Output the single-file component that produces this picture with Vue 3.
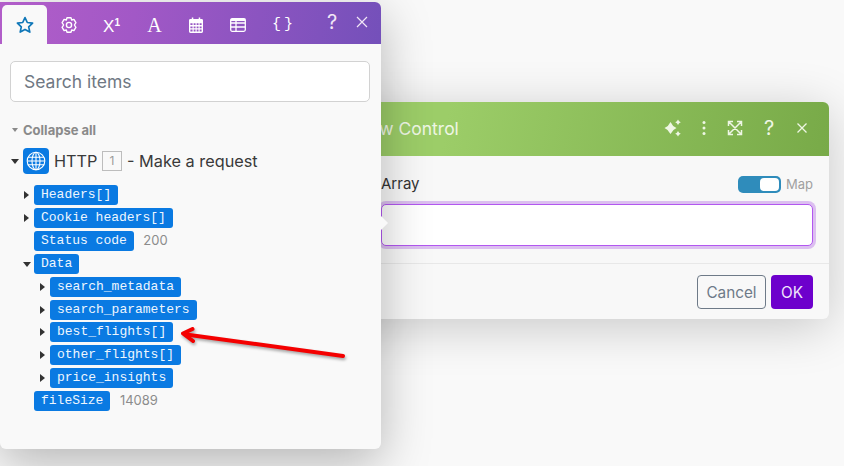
<script setup>
const rows = [
  { name: 'Headers[]', caret: 'right' },
  { name: 'Cookie headers[]', caret: 'right' },
  { name: 'Status code', value: '200' },
  { name: 'Data', caret: 'down' },
  { name: 'search_metadata', caret: 'right', nested: true },
  { name: 'search_parameters', caret: 'right', nested: true },
  { name: 'best_flights[]', caret: 'right', nested: true },
  { name: 'other_flights[]', caret: 'right', nested: true },
  { name: 'price_insights', caret: 'right', nested: true },
  { name: 'fileSize', value: '14089' },
]
</script>

<template>
  <div class="stage">
    <section class="modal">
      <header class="modal-head">
        <span class="modal-title">Flow Control</span>
        <div class="modal-tools">
          <svg class="mt" width="20" height="20" viewBox="0 0 20 20" fill="#eef6e4">
            <path d="M7.500 4 Q9.300 8.200 13.500 10 Q9.300 11.800 7.500 16 Q5.700 11.800 1.500 10 Q5.700 8.200 7.500 4Z" />
            <path d="M15 1.500 Q15.800 3.500 17.800 4.300 Q15.800 5.100 15 7.100 Q14.200 5.100 12.200 4.300 Q14.200 3.500 15 1.500Z" />
            <path d="M15 12.900 Q15.800 14.900 17.800 15.700 Q15.800 16.500 15 18.500 Q14.200 16.500 12.200 15.700 Q14.200 14.900 15 12.900Z" />
          </svg>
          <svg class="mt m-dots" width="20" height="20" viewBox="0 0 20 20" fill="#eef6e4">
            <circle cx="10" cy="4.500" r="1.500" /><circle cx="10" cy="10" r="1.500" /><circle cx="10" cy="15.500" r="1.500" />
          </svg>
          <svg class="mt m-exp" width="20" height="20" viewBox="0 0 20 20" fill="none" stroke="#eef6e4" stroke-width="1.500">
            <path d="M3.500 8V3.500H8M12 3.500H16.500V8M16.500 12V16.500H12M8 16.500H3.500V12M3.500 3.500L16.500 16.500M16.500 3.500L3.500 16.500" />
          </svg>
          <span class="mt q m-q">?</span>
          <svg class="mt m-x" width="20" height="20" viewBox="0 0 20 20" fill="none" stroke="#eef6e4" stroke-width="1.300">
            <path d="M5.500 5.500L14.500 14.500M14.500 5.500L5.500 14.500" />
          </svg>
        </div>
      </header>
      <div class="modal-body">
        <div class="field-head">
          <span class="field-label">Array</span>
          <span class="toggle"><i class="knob"></i></span>
          <span class="map">Map</span>
        </div>
        <div class="field-input"></div>
      </div>
      <footer class="modal-foot">
        <button class="btn cancel">Cancel</button>
        <button class="btn ok">OK</button>
      </footer>
    </section>

    <section class="panel">
      <header class="tabs">
        <div class="tab active">
          <svg width="20" height="20" viewBox="0 0 20 20" fill="none" stroke="#0f77b8" stroke-width="1.700" stroke-linejoin="round">
            <path d="M10 2.600L12.300 7.500L17.600 8.100L13.700 11.800L14.800 17.100L10 14.400L5.200 17.100L6.300 11.800L2.400 8.100L7.700 7.500Z" />
          </svg>
        </div>
        <div class="tab t-gear">
          <svg width="18" height="18" viewBox="0 0 18 18" fill="none" stroke="#fff" stroke-width="1.400" stroke-linejoin="round">
            <path d="M7 1.800H11L11.700 4L13.900 3.400L15.900 6.600L14.400 9L15.900 11.400L13.900 14.600L11.700 14L11 16.200H7L6.300 14L4.100 14.600L2.100 11.400L3.600 9L2.100 6.600L4.100 3.400L6.300 4Z" />
            <circle cx="9" cy="9" r="2.600" />
          </svg>
        </div>
        <div class="tab t-x"><span class="x-glyph">X<b>1</b></span></div>
        <div class="tab t-a"><span class="a-glyph">A</span></div>
        <div class="tab t-cal">
          <svg width="14" height="16" viewBox="0 0 15 17" fill="#fff">
            <path d="M3 0.500h1.600v2H3zM10.400 0.500H12v2h-1.600z" />
            <path fill-rule="evenodd" d="M1.500 2h12A1.500 1.500 0 0 1 15 3.500V15.500A1.500 1.500 0 0 1 13.500 17H1.500A1.500 1.500 0 0 1 0 15.500V3.500A1.500 1.500 0 0 1 1.500 2ZM1.500 6.500V8.500H3.800V6.500ZM5 6.500V8.500H7V6.500ZM8.200 6.500V8.500H10.200V6.500ZM11.400 6.500V8.500H13.500V6.500ZM1.500 10V12H3.800V10ZM5 10V12H7V10ZM8.200 10V12H10.200V10ZM11.400 10V12H13.500V10ZM1.500 13.200V15.400H3.800V13.200ZM5 13.200V15.400H7V13.200ZM8.200 13.200V15.400H10.200V13.200ZM11.400 13.200V15.400H13.500V13.200Z" />
          </svg>
        </div>
        <div class="tab t-table">
          <svg width="16" height="14" viewBox="0 0 16 14" fill="none" stroke="#fff" stroke-width="1.300">
            <rect x="0.700" y="0.700" width="14.600" height="12.600" rx="1.500" />
            <path d="M0.700 5H15.300M0.700 9H15.300M6 1V13" />
            <rect x="0.700" y="0.700" width="14.600" height="2.300" fill="#fff" stroke="none" />
          </svg>
        </div>
        <div class="tab t-json"><span class="json-glyph">{}</span></div>
        <span class="help">?</span>
        <svg class="close" width="14" height="14" viewBox="0 0 14 14" fill="none" stroke="#f1e6f6" stroke-width="1.200">
          <path d="M2 2L12 12M12 2L2 12" />
        </svg>
      </header>

      <div class="search">Search items</div>

      <div class="collapse"><i class="caret down gray"></i>Collapse all</div>

      <div class="module">
        <i class="caret down dark"></i>
        <span class="globe">
          <svg width="20" height="20" viewBox="0 0 20 20" fill="none" stroke="#fff" stroke-width="1.100">
            <circle cx="10" cy="10" r="8.800" />
            <ellipse cx="10" cy="10" rx="4" ry="8.800" />
            <path d="M10 1.200V18.800M2.100 6.300H17.900M1.300 10H18.700M2.100 13.700H17.900" />
          </svg>
        </span>
        <span class="module-name">HTTP</span>
        <span class="badge">1</span>
        <span class="module-name">- Make a request</span>
      </div>

      <ul class="tree">
        <li v-for="r in rows" :key="r.name" class="row" :class="{ nested: r.nested }">
          <i v-if="r.caret" class="caret dark" :class="r.caret"></i>
          <span class="tag">{{ r.name }}</span>
          <span v-if="r.value" class="val">{{ r.value }}</span>
        </li>
      </ul>
      <i class="pointer"></i>
    </section>

    <svg class="arrow" width="190" height="50" viewBox="170 320 190 50" fill="none">
      <g stroke="#f40000" stroke-width="4" stroke-linecap="round" stroke-linejoin="round">
        <path d="M343 356L186 334.500" />
        <path d="M192.500 329L183 333.500L193 341" />
      </g>
    </svg>
  </div>
</template>

<style scoped>
.stage {
  position: relative;
  width: 844px;
  height: 466px;
  overflow: hidden;
  background: #f9f9f9;
  font-family: Inter, "Noto Sans", sans-serif;
}

.modal {
  position: absolute;
  left: 320px;
  top: 102px;
  width: 509px;
  height: 217px;
  display: flex;
  flex-direction: column;
  background: #f8f8f8;
  border-radius: 6px;
  box-shadow: 0 8px 50px rgba(0, 0, 0, 0.2);
}
.modal-head {
  height: 54px;
  flex: none;
  display: flex;
  align-items: center;
  justify-content: space-between;
  padding: 0 17.500px 2px 34.500px;
  box-sizing: border-box;
  border-radius: 6px 6px 0 0;
  background: linear-gradient(100deg, #9ccd68 25%, #78aa48 100%);
}
.modal-title { color: #eef6e4; font-size: 17.500px; }
.modal-tools { display: flex; align-items: center; }
.mt { width: 20px; height: 20px; display: block; }
.m-dots { margin-left: 11px; }
.m-exp { margin-left: 11.500px; }
.m-q { margin-left: 14px; }
.m-x { margin-left: 12.500px; }
.q { color: #eef6e4; font-size: 20px; line-height: 20px; text-align: center; }
.modal-body { padding: 0 16px 0 61px; flex: 1; }
.field-head { display: flex; align-items: center; height: 48px; padding-top: 8px; box-sizing: border-box; }
.field-label { font-size: 15px; color: #333; margin-right: auto; margin-top: -2px; }
.toggle {
  width: 43px;
  height: 17px;
  box-sizing: border-box;
  border-radius: 5px;
  background: #2f8cbb;
  padding: 2px;
  display: flex;
  justify-content: flex-end;
}
.knob { width: 19px; height: 13px; background: #fff; border-radius: 4px; display: block; }
.map { font-size: 13px; color: #a0a0a0; margin-left: 5px; width: 27px; }
.field-input {
  height: 42px;
  box-sizing: border-box;
  border: 1px solid #b257f0;
  border-radius: 5px;
  background: #fff;
  box-shadow: 0 0 0 3px #dcbff0;
}
.modal-foot {
  height: 56px;
  box-sizing: border-box;
  flex: none;
  border-top: 1px solid #e8e8e8;
  display: flex;
  justify-content: flex-end;
  gap: 5px;
  padding: 11px 16px 0 0;
}
.btn {
  height: 34px;
  border-radius: 4px;
  font: 15.300px Inter, sans-serif;
  padding: 0;
}
.cancel { width: 69px; background: transparent; border: 1px solid #6e7a88; color: #6e7a88; }
.ok { width: 42px; background: #6d00cc; border: 0; color: #f0e4fb; }

.panel {
  position: absolute;
  left: 0;
  top: 2px;
  width: 381px;
  height: 447px;
  background: #f9f9f9;
  border-radius: 0 6px 6px 6px;
  box-shadow: 0 14px 50px rgba(0, 0, 0, 0.28);
}
.pointer {
  position: absolute;
  left: 376px;
  top: 216px;
  width: 10px;
  height: 10px;
  background: #f9f9f9;
  transform: rotate(45deg);
}
.tabs {
  height: 42px;
  position: relative;
  display: flex;
  padding-left: 2px;
  border-radius: 0 6px 0 0;
  background: linear-gradient(100deg, #b25ec9 0%, #a258c6 35%, #7450ba 100%);
}
.tab {
  position: relative;
  height: 39px;
  margin-top: 3px;
  display: flex;
  align-items: center;
  justify-content: center;
}
.tab.active { width: 45px; background: #f9f9f9; border-radius: 5px 5px 0 0; }
.t-gear { width: 43px; }
.t-x { width: 43px; }
.t-a { width: 43px; }
.t-cal { width: 40px; }
.t-table { width: 44px; }
.t-json { width: 46px; }
.x-glyph { color: #fff; font: 17px "Liberation Sans", sans-serif; position: relative; top: 2px; }
.x-glyph b { font-size: 10px; font-weight: 700; position: relative; top: -6px; }
.a-glyph { color: #fff; font: 20px "Liberation Serif", serif; position: relative; top: 1px; }
.json-glyph { color: #fff; font: 400 15px "Liberation Mono", monospace; letter-spacing: 3px; position: relative; left: 1px; }
.help { position: absolute; left: 327px; top: 10px; color: #f1e6f6; font-size: 20px; line-height: 20px; }
.close { position: absolute; left: 355px; top: 13px; }

.search {
  margin: 17px 11px 0 10px;
  height: 41px;
  box-sizing: border-box;
  border: 1px solid #d2d2d2;
  border-radius: 5px;
  background: #fff;
  padding-left: 13px;
  font-size: 17.500px;
  line-height: 39px;
  color: #6f7883;
}
.collapse {
  margin: 20px 0 0 12px;
  display: flex;
  align-items: center;
  font-size: 13px;
  font-weight: 700;
  line-height: 16px;
  color: #8a8a8a;
}
.collapse .caret { margin-right: 5px; }
.module {
  margin: 10px 0 0 11px;
  height: 26px;
  display: flex;
  align-items: center;
}
.module .caret { margin-right: 4px; }
.globe {
  width: 26px;
  height: 26px;
  border-radius: 4px;
  background: #0a7ae2;
  display: flex;
  align-items: center;
  justify-content: center;
  margin-right: 5px;
}
.module-name { font-size: 16.300px; color: #3a3a3a; }
.badge {
  width: 20px;
  height: 20px;
  box-sizing: border-box;
  margin: 0 5px 0 4.500px;
  border: 1px solid #bdbdbd;
  font-size: 12px;
  line-height: 18px;
  text-align: center;
  color: #9a9a9a;
}
.tree {
  list-style: none;
  margin: 11.300px 0 0;
  padding: 0 0 0 34px;
  display: flex;
  flex-direction: column;
  gap: 2.850px;
}
.row { position: relative; height: 20px; display: flex; align-items: center; }
.row.nested { padding-left: 16px; }
.row > .caret { position: absolute; left: -10px; top: 7px; }
.row.nested > .caret { left: 6px; }
.tag {
  height: 20px;
  padding: 0 7px;
  border-radius: 3px;
  background: #0a7ae2;
  color: #eef6fe;
  font: 13px/19px "Liberation Mono", monospace;
}
.val { margin-left: 9.500px; margin-top: -1px; font-size: 13px; color: #8c8c8c; }
.caret { display: block; width: 0; height: 0; flex: none; }
.caret.right {
  border-left: 5px solid #333;
  border-top: 4px solid transparent;
  border-bottom: 4px solid transparent;
  margin-top: -1px;
}
.caret.down {
  border-top: 5px solid #333;
  border-left: 4px solid transparent;
  border-right: 4px solid transparent;
}
.caret.down.gray { border-top-color: #8a8a8a; border-left-width: 3.500px; border-right-width: 3.500px; border-top-width: 4px; }
.row > .caret.down { left: -11px; top: 8px; margin: 0; }
.arrow {
  position: absolute;
  left: 170px;
  top: 320px;
  filter: drop-shadow(1px 2px 1.500px rgba(0, 0, 0, 0.35));
}
</style>
